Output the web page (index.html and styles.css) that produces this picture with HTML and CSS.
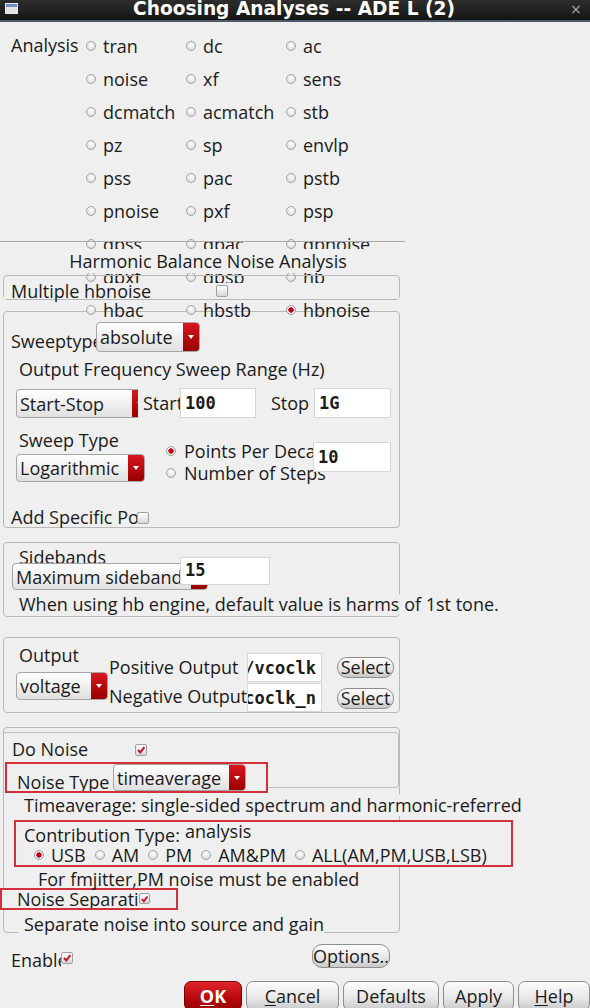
FILE: index.html
```html
<!DOCTYPE html>
<html lang="en">
  <head>
    <meta charset="UTF-8" />
    <meta name="viewport" content="width=device-width, initial-scale=1.0" />
    <title>Choosing Analyses -- ADE L (2)</title>
    <link rel="stylesheet" href="styles.css">
  </head>
  <body>
    <div class="titlebar">
      <span class="win-icon"></span>
      <span class="title">Choosing Analyses -- ADE L (2)</span>
      <span class="close">&times;</span>
    </div>

    <!-- Analysis chooser -->
    <div class="analysis">
      <div class="grid">
        <span class="grid-label">Analysis</span>
        <label class="radio"><i class="rb"></i>tran</label>
        <label class="radio"><i class="rb"></i>dc</label>
        <label class="radio"><i class="rb"></i>ac</label>
        <label class="radio"><i class="rb"></i>noise</label>
        <label class="radio"><i class="rb"></i>xf</label>
        <label class="radio"><i class="rb"></i>sens</label>
        <label class="radio"><i class="rb"></i>dcmatch</label>
        <label class="radio"><i class="rb"></i>acmatch</label>
        <label class="radio"><i class="rb"></i>stb</label>
        <label class="radio"><i class="rb"></i>pz</label>
        <label class="radio"><i class="rb"></i>sp</label>
        <label class="radio"><i class="rb"></i>envlp</label>
        <label class="radio"><i class="rb"></i>pss</label>
        <label class="radio"><i class="rb"></i>pac</label>
        <label class="radio"><i class="rb"></i>pstb</label>
        <label class="radio"><i class="rb"></i>pnoise</label>
        <label class="radio"><i class="rb"></i>pxf</label>
        <label class="radio"><i class="rb"></i>psp</label>
        <label class="radio"><i class="rb"></i>qpss</label>
        <label class="radio"><i class="rb"></i>qpac</label>
        <label class="radio"><i class="rb"></i>qpnoise</label>
        <label class="radio"><i class="rb"></i>qpxf</label>
        <label class="radio"><i class="rb"></i>qpsp</label>
        <label class="radio"><i class="rb"></i>hb</label>
        <label class="radio"><i class="rb"></i>hbac</label>
        <label class="radio"><i class="rb"></i>hbstb</label>
        <label class="radio"><i class="rb on"></i>hbnoise</label>
      </div>

      <!-- hbnoise group box drawn over the scrolled radio rows -->
      <div class="hb-line"></div>
      <div class="hb-title">Harmonic Balance Noise Analysis</div>
      <div class="hb-multi">
        <div class="hb-multi-row">
          <span class="lbl-multi">Multiple hbnoise</span>
          <i class="cb"></i>
        </div>
      </div>
    </div>

    <!-- Sweep -->
    <div class="frame sweep">
      <div class="sweep-head">
        <span class="lbl-sweeptype">Sweeptype</span>
        <div class="combo combo-abs"><span>absolute</span><b></b></div>
      </div>
      <div class="caption cap-range">Output Frequency Sweep Range (Hz)</div>
      <div class="range-row">
        <div class="combo combo-range"><span>Start-Stop</span><b></b></div>
        <span class="lbl-start">Start</span>
        <div class="field field-start">100</div>
        <span class="lbl-stop">Stop</span>
        <div class="field field-stop">1G</div>
      </div>
      <div class="type-row">
        <div class="type-col">
          <div class="caption cap-type">Sweep Type</div>
          <div class="combo combo-log"><span>Logarithmic</span><b></b></div>
        </div>
        <div class="step-col">
          <label class="radio"><i class="rb on"></i>Points Per Decade</label>
          <label class="radio"><i class="rb"></i>Number of Steps</label>
        </div>
        <div class="field field-steps">10</div>
      </div>
      <div class="add-row">
        <span class="lbl-add">Add Specific Points</span>
        <i class="cb"></i>
      </div>
    </div>

    <!-- Sidebands -->
    <div class="frame sidebands">
      <div class="caption sb-title">Sidebands</div>
      <div class="sb-row">
        <div class="combo combo-sb"><span>Maximum sidebands</span><b></b></div>
        <div class="field field-sb">15</div>
      </div>
      <div class="note sb-note">When using hb engine, default value is harms of 1st tone.</div>
    </div>

    <!-- Output -->
    <div class="frame output">
      <div class="out-row">
        <div class="out-col">
          <div class="caption cap-out">Output</div>
          <div class="combo combo-volt"><span>voltage</span><b></b></div>
        </div>
        <div class="out-labels">
          <div>Positive Output</div>
          <div>Negative Output</div>
        </div>
        <div class="out-fields">
          <div class="field field-net"><span>/vcoclk</span></div>
          <div class="field field-net"><span>/vcoclk_n</span></div>
        </div>
        <div class="out-btns">
          <button class="btn btn-select">Select</button>
          <button class="btn btn-select">Select</button>
        </div>
      </div>
    </div>

    <!-- Noise -->
    <div class="frame noise">
      <div class="noise-top">
        <div class="donoise-row">
          <span class="lbl-donoise">Do Noise</span>
          <i class="cb"><svg viewBox="0 0 10 10"><path d="M2 5 L4.3 7.5 L8.3 2.2" /></svg></i>
        </div>
        <div class="mark ntype-box">
          <span class="lbl-ntype">Noise Type</span>
          <div class="combo combo-nt"><span>timeaverage</span><b></b></div>
        </div>
      </div>
      <div class="note tavg-note">Timeaverage: single-sided spectrum and harmonic-referred</div>
      <div class="mark contrib-box">
        <div class="contrib-head">
          <span class="lbl-contrib">Contribution Type:</span>
          <span class="contrib-more">analysis</span>
        </div>
        <div class="contrib-opts">
          <label class="radio"><i class="rb on"></i>USB</label>
          <label class="radio"><i class="rb"></i>AM</label>
          <label class="radio"><i class="rb"></i>PM</label>
          <label class="radio"><i class="rb"></i>AM&amp;PM</label>
          <label class="radio"><i class="rb"></i>ALL(AM,PM,USB,LSB)</label>
        </div>
      </div>
      <div class="fm-note">For fmjitter,PM noise must be enabled</div>
      <div class="mark nsep-box">
        <span class="lbl-nsep">Noise Separation</span>
        <i class="cb cb-small"><svg viewBox="0 0 10 10"><path d="M2 5 L4.3 7.5 L8.3 2.2" /></svg></i>
      </div>
      <div class="note sep-note">Separate noise into source and gain</div>
    </div>

    <div class="enable-row">
      <span class="lbl-enable">Enabled</span>
      <i class="cb"><svg viewBox="0 0 10 10"><path d="M2 5 L4.3 7.5 L8.3 2.2" /></svg></i>
      <button class="btn btn-options">Options..</button>
    </div>

    <div class="dialog-btns">
      <button class="btn btn-ok"><u>O</u>K</button>
      <button class="btn btn-cancel"><u>C</u>ancel</button>
      <button class="btn btn-defaults">Defaults</button>
      <button class="btn btn-apply">Apply</button>
      <button class="btn btn-help"><u>H</u>elp</button>
    </div>
  </body>
</html>
```

FILE: styles.css
```css
* {
  margin: 0;
  padding: 0;
  box-sizing: border-box;
}

html,
body {
  height: 1008px;
  overflow: hidden;
}

body {
  background: #efefef;
  font-family: "Open Sans", "Noto Sans", sans-serif;
  font-size: 18px;
  color: #1b1b1b;
}

/* window title */
.titlebar {
  height: 22px;
  display: flex;
  align-items: flex-start;
  background: linear-gradient(#2e2e2e, #141414);
  border-bottom: 2px solid #4c5a6a;
}

.win-icon {
  width: 13px;
  height: 11px;
  margin: 3px 0 0 5px;
  border: 1px solid #e8e8e8;
  background: linear-gradient(#6f8fc4 0 3px, #e4e4e4 3px);
}

.title {
  flex: 1;
  text-align: center;
  color: #fff;
  font-family: "DejaVu Sans", sans-serif;
  font-weight: bold;
  font-size: 18.6px;
  line-height: 18px;
}

.close {
  width: 20px;
  color: #a8a8a8;
  font-family: "DejaVu Sans", sans-serif;
  font-size: 14px;
  line-height: 18px;
}

/* radio / check */
.radio {
  display: flex;
  align-items: center;
  gap: 7px;
  white-space: nowrap;
}

.rb {
  flex: none;
  width: 10px;
  height: 10px;
  border-radius: 50%;
  border: 1px solid #a2a2a2;
  background: radial-gradient(circle at 50% 35%, #ffffff, #d4d4d4);
}

.rb.on {
  background: radial-gradient(circle, #c4001a 0 2.4px, #f6f6f6 3px, #d4d4d4);
}

.cb {
  flex: none;
  width: 12px;
  height: 12px;
  border: 1px solid #a0a0a0;
  border-radius: 2px;
  background: linear-gradient(#ffffff, #d8d8d8);
  display: flex;
}

.cb svg {
  width: 10px;
  height: 10px;
}

.cb path {
  fill: none;
  stroke: #c8102e;
  stroke-width: 2;
}

.cb-small {
  width: 11px;
  height: 11px;
  margin-top: 3px;
}

/* analysis grid */
.analysis {
  position: relative;
  padding-top: 7px;
}

.grid {
  display: grid;
  grid-template-columns: 75px 100px 100px 100px;
  grid-auto-rows: 33px;
  padding-left: 11px;
}

.grid-label {
  grid-row: 1 / span 9;
  line-height: 33px;
}

.grid .radio:nth-child(3n + 5) {
  grid-column: 2;
}

.hb-line {
  position: absolute;
  top: 219px;
  left: 0;
  width: 405px;
  height: 1px;
  background: #a9a9a9;
}

.hb-title {
  position: absolute;
  top: 227px;
  left: 0;
  width: 405px;
  height: 24px;
  line-height: 24px;
  padding-left: 11px;
  text-align: center;
  background: #efefef;
}

.hb-multi {
  position: absolute;
  top: 253px;
  left: 3px;
  width: 397px;
  height: 25px;
  border: 1px solid #b8b8b8;
  border-radius: 4px;
}

.hb-multi-row {
  margin-top: 7px;
  height: 16px;
  display: flex;
  background: #efefef;
}

.lbl-multi {
  width: 212px;
  padding-left: 7px;
  line-height: 16px;
}

.hb-multi-row .cb {
  margin-top: 2px;
}

/* frames */
.frame {
  width: 397px;
  margin-left: 3px;
  border: 1px solid #b8b8b8;
  border-radius: 4px;
}

.caption {
  line-height: 22px;
  white-space: nowrap;
}

.combo {
  display: flex;
  border: 1px solid #a6a6a6;
  border-radius: 4px;
  background: linear-gradient(#ffffff, #e0e0e0);
  overflow: hidden;
  flex: none;
}

.combo span {
  flex: 1;
  padding-left: 3px;
  white-space: nowrap;
  overflow: hidden;
  display: flex;
  align-items: center;
}

.combo b {
  flex: none;
  width: 16px;
  display: flex;
  align-items: center;
  justify-content: center;
  background: linear-gradient(#d9161e, #980000);
}

.combo b::after {
  content: "";
  border-left: 3.5px solid transparent;
  border-right: 3.5px solid transparent;
  border-top: 4px solid #ffffff;
}

.field {
  flex: none;
  background: #ffffff;
  border: 1px solid #d6d6d6;
  font-family: "DejaVu Sans Mono", monospace;
  font-weight: bold;
  font-size: 17px;
  padding-left: 4px;
  white-space: nowrap;
  overflow: hidden;
  display: flex;
  align-items: center;
}

.note {
  width: max-content;
  line-height: 22px;
  background: #efefef;
  white-space: nowrap;
}

.mark {
  border: 2px solid #d3303c;
  background: #efefef;
}

/* sweep frame */
.sweep {
  height: 217px;
  margin-top: -15px;
}

.sweep-head {
  display: flex;
  margin-top: 10px;
  height: 30px;
}

.lbl-sweeptype {
  width: 92px;
  padding: 8px 0 0 7px;
  line-height: 22px;
  overflow: hidden;
  white-space: nowrap;
}

.combo-abs {
  width: 104px;
  height: 30px;
}

.cap-range {
  margin-top: 4px;
  line-height: 26px;
  padding-left: 15px;
}

.range-row {
  display: flex;
  margin-top: 6px;
  height: 30px;
  padding-left: 12px;
}

.combo-range {
  width: 133px;
  height: 29px;
  margin-top: 1px;
}

.lbl-start {
  width: 42px;
  margin-left: -11px;
  padding-left: 5px;
  line-height: 30px;
  background: #efefef;
  overflow: hidden;
  white-space: nowrap;
  flex: none;
}

.field-start {
  width: 76px;
  height: 30px;
}

.lbl-stop {
  width: 43px;
  margin-left: 15px;
  line-height: 30px;
  flex: none;
}

.field-stop {
  width: 77px;
  height: 30px;
}

.type-row {
  display: flex;
  margin-top: 11px;
  padding-left: 12px;
}

.type-col {
  width: 150px;
  flex: none;
}

.cap-type {
  padding-left: 3px;
}

.combo-log {
  width: 129px;
  height: 28px;
  margin-top: 3px;
}

.step-col {
  width: 147px;
  flex: none;
  padding-top: 11px;
  line-height: 22px;
}

.step-col .radio {
  gap: 8px;
}

.field-steps {
  width: 78px;
  height: 30px;
  margin-top: 13px;
}

.add-row {
  display: flex;
  margin-top: 22px;
  line-height: 22px;
}

.lbl-add {
  width: 133px;
  padding-left: 7px;
  overflow: hidden;
  white-space: nowrap;
}

.add-row .cb {
  margin-top: 6px;
}

/* sidebands frame */
.sidebands {
  height: 75px;
  margin-top: 14px;
}

.sb-title {
  margin-top: 3px;
  padding-left: 15px;
}

.sb-row {
  display: flex;
  margin-top: -11px;
  padding-left: 8px;
}

.combo-sb {
  width: 196px;
  height: 27px;
  margin-top: 6px;
}

.field-sb {
  width: 90px;
  height: 28px;
  margin-left: -28px;
  align-items: flex-start;
  line-height: 24px;
}

.sb-note {
  margin-top: 4px;
  margin-left: 13px;
  padding: 0 2px;
  line-height: 20px;
}

/* output frame */
.output {
  height: 76px;
  margin-top: 20px;
}

.out-row {
  display: flex;
  padding-left: 12px;
}

.out-col {
  width: 92px;
  flex: none;
}

.cap-out {
  margin-top: 6px;
  padding-left: 3px;
}

.combo-volt {
  width: 92px;
  height: 28px;
  margin-top: 6px;
}

.out-labels {
  width: 139px;
  flex: none;
  margin-top: 15px;
  padding-left: 1px;
  line-height: 29px;
  overflow: hidden;
  white-space: nowrap;
}

.out-fields {
  width: 75px;
  flex: none;
  margin-top: 15px;
  display: flex;
  flex-direction: column;
  gap: 1px;
}

.field-net {
  height: 29px;
  justify-content: flex-end;
  padding: 0 5px 0 0;
}

.field-net span {
  flex: none;
}

.out-btns {
  width: 57px;
  flex: none;
  margin: 19px 0 0 15px;
  display: flex;
  flex-direction: column;
  gap: 10px;
}

/* buttons */
.btn {
  border: 1px solid #8e8e8e;
  border-radius: 7px;
  background: linear-gradient(#fdfdfd, #e8e8e8 55%, #c9c9c9);
  font-family: "Open Sans", "Noto Sans", sans-serif;
  font-size: 18px;
  color: #1b1b1b;
  text-align: center;
  white-space: nowrap;
  overflow: hidden;
  flex: none;
}

.btn u {
  text-decoration-thickness: 1px;
  text-underline-offset: 2px;
}

.btn-select {
  height: 21px;
  line-height: 19px;
  border-radius: 10px;
}

/* noise frame */
.noise {
  height: 206px;
  margin-top: 14px;
}

.noise-top {
  width: 395px;
  height: 56px;
  margin-top: 4px;
  border: 1px solid #c0c0c0;
  border-left: none;
  border-radius: 0 4px 4px 0;
}

.donoise-row {
  display: flex;
  margin-top: 5px;
  padding-left: 8px;
  line-height: 22px;
}

.lbl-donoise {
  width: 123px;
}

.donoise-row .cb {
  margin-top: 6px;
}

.ntype-box {
  display: flex;
  width: 263px;
  height: 31px;
  margin: 2px 0 0 1px;
}

.lbl-ntype {
  width: 106px;
  height: 27px;
  padding: 7px 0 0 10px;
  line-height: 22px;
  overflow: hidden;
  white-space: nowrap;
  flex: none;
}

.combo-nt {
  width: 133px;
  height: 27px;
}

.tavg-note {
  margin: 6px 0 0 20px;
}

.contrib-box {
  width: 499px;
  height: 47px;
  margin: 4px 0 0 10px;
}

.contrib-head {
  display: flex;
  height: 24px;
}

.lbl-contrib {
  width: 167px;
  margin-top: 2px;
  padding-left: 8px;
  line-height: 22px;
  overflow: hidden;
  white-space: nowrap;
  flex: none;
}

.contrib-more {
  padding-left: 2px;
  line-height: 18px;
  background: #efefef;
}

.contrib-opts {
  display: flex;
  gap: 9px;
  padding-left: 18px;
  line-height: 18px;
}

.fm-note {
  margin: 1px 0 0 34px;
  line-height: 22px;
}

.nsep-box {
  display: flex;
  width: 178px;
  height: 22px;
  margin: -2px 0 0 -4px;
}

.lbl-nsep {
  width: 137px;
  padding-left: 15px;
  line-height: 18px;
  overflow: hidden;
  white-space: nowrap;
  flex: none;
}

.sep-note {
  margin: 3px 0 0 14px;
  padding-left: 6px;
}

/* bottom */
.enable-row {
  display: flex;
  height: 24px;
  margin-top: 11px;
}

.lbl-enable {
  width: 61px;
  padding: 6px 0 0 11px;
  line-height: 20px;
  overflow: hidden;
  white-space: nowrap;
  flex: none;
}

.enable-row .cb {
  margin-top: 8px;
}

.btn-options {
  width: 78px;
  height: 24px;
  margin-left: 239px;
  border-radius: 10px;
  line-height: 22px;
}

.dialog-btns {
  display: flex;
  gap: 4px;
  margin-top: 13px;
  padding-left: 184px;
}

.dialog-btns .btn {
  height: 30px;
  line-height: 28px;
}

.btn-ok {
  width: 58px;
  background: linear-gradient(#e0242b, #b80a10 55%, #990000);
  border-color: #7c0000;
  color: #fff;
  font-weight: bold;
}

.btn-cancel {
  width: 93px;
}

.btn-defaults {
  width: 96px;
}

.btn-apply {
  width: 71px;
}

.btn-help {
  width: 72px;
}
```
